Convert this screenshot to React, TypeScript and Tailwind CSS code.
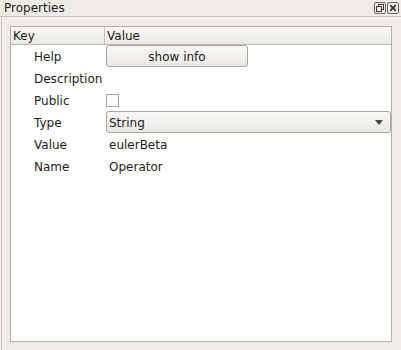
import React from 'react';

const rows = [
  { key: 'Help', kind: 'button', value: 'show info' },
  { key: 'Description', kind: 'text', value: '' },
  { key: 'Public', kind: 'check', value: '' },
  { key: 'Type', kind: 'combo', value: 'String' },
  { key: 'Value', kind: 'text', value: 'eulerBeta' },
  { key: 'Name', kind: 'text', value: 'Operator' },
];

const FloatIcon = () => (
  <svg width="12" height="12" viewBox="0 0 12 12">
    <rect x="0.5" y="0.5" width="11" height="11" rx="1.5" fill="none" stroke="#6b6966" />
    <rect x="4.5" y="2.5" width="5" height="5" fill="none" stroke="#3c3b39" />
    <rect x="2.5" y="4.5" width="5" height="5" fill="#efebe7" stroke="#3c3b39" />
  </svg>
);

const CloseIcon = () => (
  <svg width="12" height="12" viewBox="0 0 12 12">
    <rect x="0.5" y="0.5" width="11" height="11" rx="1.5" fill="none" stroke="#6b6966" />
    <path d="M3.2 3.2 L8.8 8.8 M8.8 3.2 L3.2 8.8" stroke="#2e2d2b" strokeWidth="1.7" />
  </svg>
);

export default function App() {
  return (
    <div className="w-[401px] h-[350px] bg-[#efebe7] flex flex-col text-[12px] text-[#1c1c1c] font-['DejaVu_Sans',sans-serif] overflow-hidden">
      {/* Dock title */}
      <div className="h-[17px] flex items-center justify-between pl-[4px] pr-[2px] border-b border-[#c9c5c0]">
        <span className="leading-none">Properties</span>
        <div className="flex items-center gap-[1px]">
          <FloatIcon />
          <CloseIcon />
        </div>
      </div>

      <div className="flex-1 flex flex-col ml-[1px] border-l border-[#c9c5c0] pl-[8px] pr-[9px] pt-[9px] pb-[8px]">
        <div className="flex-1 flex flex-col bg-white border border-[#b3b0ac]">
          {/* Header */}
          <div className="h-[18px] flex bg-gradient-to-b from-[#faf9f8] to-[#ebe8e4] border-b border-[#bcb9b5]">
            <div className="w-[94px] pl-[2px] flex items-center border-r border-[#c6c3bf]">Key</div>
            <div className="flex-1 pl-[2px] flex items-center">Value</div>
          </div>

          {rows.map((r) => (
            <div key={r.key} className="h-[22px] flex">
              <div className="w-[95px] pl-[23px] pt-[1px] flex items-center">{r.key}</div>
              <div className="flex-1 flex items-center">
                {r.kind === 'button' && (
                  <div className="w-[142px] h-[22px] pt-[1px] flex items-center justify-center rounded-[3px] border border-[#a9a6a2] bg-gradient-to-b from-[#f9f8f7] to-[#ebe8e4]">
                    {r.value}
                  </div>
                )}
                {r.kind === 'check' && (
                  <div className="w-[13px] h-[13px] mt-[1px] border border-[#a9a6a2] bg-white" />
                )}
                {r.kind === 'combo' && (
                  <div className="w-full h-[22px] pt-[1px] flex items-center justify-between pl-[2px] pr-[7px] rounded-[3px] border border-[#a9a6a2] bg-gradient-to-b from-[#f9f8f7] to-[#ebe8e4]">
                    <span>{r.value}</span>
                    <svg width="8" height="5" viewBox="0 0 8 5">
                      <path d="M0 0 L8 0 L4 5 Z" fill="#4a4947" />
                    </svg>
                  </div>
                )}
                {r.kind === 'text' && <span className="pl-[3px] pt-[1px]">{r.value}</span>}
              </div>
            </div>
          ))}
        </div>
      </div>
    </div>
  );
}
